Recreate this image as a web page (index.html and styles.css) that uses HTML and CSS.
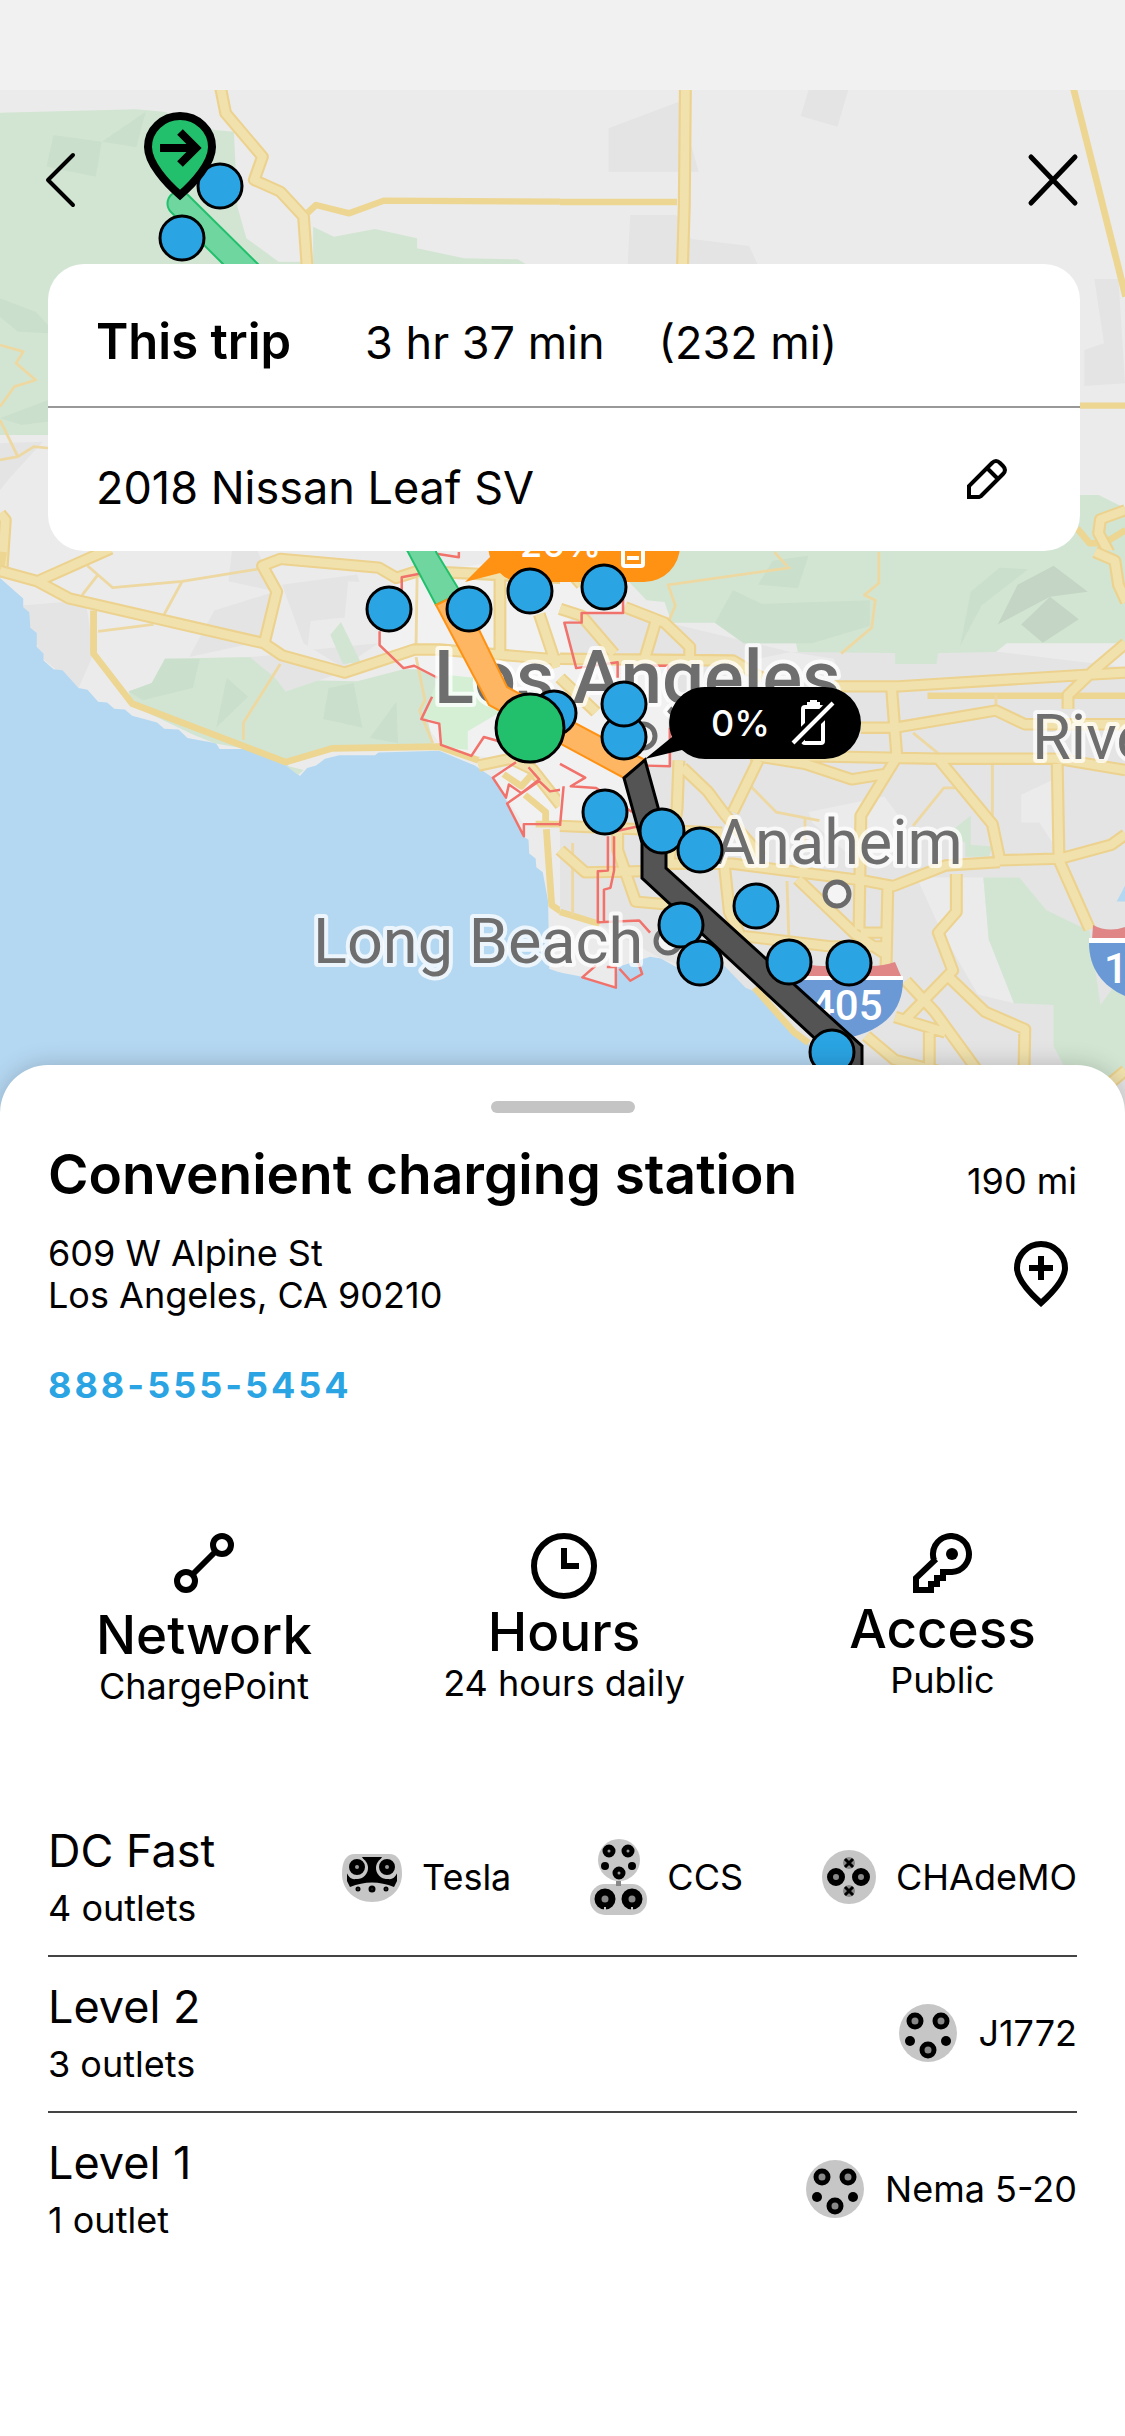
FILE: index.html
```html
<!DOCTYPE html>
<html lang="en">
<head>
<meta charset="utf-8">
<meta name="viewport" content="width=device-width, initial-scale=1">
<title>Convenient charging station</title>
<link rel="stylesheet" href="styles.css">
</head>
<body>
<div class="status-bar"></div>
<main>
<section class="hero" aria-label="Trip map">
  <svg class="map" viewBox="0 90 1125 1025" role="img" aria-label="Map of Los Angeles with charging stations">
    <rect class="land" y="90" width="1125" height="1025"/>

    <!-- north west -->
    <g transform="translate(0 80) scale(.3571 .3333)">
      <path class="park" d="M0 98 380 88 460 95 600 150 655 155 665 380 690 475 780 545 860 545 860 700 200 700 200 1065 0 1065Z"/>
      <path class="park" d="M877 440 935 470 1050 447 1168 475V505L1300 535 1450 538 1500 570H877Z"/>
      <path class="park-dark" d="M285 185 408 95 382 202ZM150 165 285 185 268 290 130 260ZM0 655 100 695 134 735V760L50 755 0 710ZM134 960 0 1015 60 1035 134 1025Z"/>
      <path class="pale" d="M860 170 1005 75 890 210ZM590 40V140L550 130Z"/>
      <path class="urban" d="M0 1090 120 1085 30 1190 0 1230Z"/>
      <g id="nw"><path class="rm" d="M618 25 632 100 735 230 712 300 785 335 850 410 860 560M0 1300 15 1320 5 1480"/></g>
      <use href="#nw" class="top"/>
      <path class="rs" d="M860 400 885 375 978 400 1075 362 1568 365"/>
      <path class="rt" d="M0 795 65 815 45 850 100 900 40 920 0 980M0 1020 50 1130 95 1100 140 1105M50 1130 0 1140"/>
    </g>

    <!-- north east -->
    <g transform="translate(560 80) scale(.3603 .3333)">
      <path class="urban" d="M135 145 330 65 385 275H135ZM690 30H800L770 140 668 108ZM188 552 195 405H322L365 477 525 498 548 552ZM1483 597H1550L1568 910 1455 918V810L1510 790Z"/>
      <path class="park" d="M1440 1245H1495L1570 1285V1480H1200Z"/>
      <path class="rs" d="M0 366H325M1425 25 1570 650M1440 977H1570"/>
      <path class="rs" d="M1435 1345 1470 1390 1510 1390 1570 1350"/>
      <g id="ne"><path class="rm" d="M348 25 345 375 340 560M1570 1290 1500 1318 1495 1360 1520 1410 1545 1480"/></g>
      <use href="#ne" class="top"/>
    </g>

    <!-- south west -->
    <g transform="translate(0 540) scale(.3571 .3444)">
      <path class="urban" d="M60 190 240 175 262 330 220 430 120 345ZM600 205 770 150 750 290 530 340ZM650 30H720L775 150 640 120ZM790 130 1000 100 1060 300 960 370 850 300ZM700 340 800 330 960 385 800 440Z"/>
      <path class="pale" d="M975 120 1125 130 1065 210 1060 300 860 320 870 235 965 225Z"/>
      <path class="city" d="M1125 105 1570 35V830H1470L1380 690 1440 640 1320 625 1235 595 1180 520 1225 400 1130 370 1065 305V200Z"/>
      <path class="sea" d="M0 110 65 170V195L82 210 85 255 103 270V310L122 330V350L150 375 175 378 220 430 245 435 275 470 300 472 320 490 350 492 370 510 440 530 460 548 500 550 525 575 605 590 615 607H690L740 625 800 650 840 685 860 662 885 655 910 635 950 625H1050L1060 617 1230 612 1330 655 1380 690 1420 760 1465 860 1480 870 1482 910 1500 925 1502 950 1520 965 1535 1050 1538 1245 1572 1257V1690H0Z"/>
      <path class="park" d="M360 440 425 415 462 345 700 340 770 400 800 440 890 408 1000 410 1130 375H1180L1230 400 1195 510 1215 600 930 610 800 655 850 668 835 682 800 655 680 605 600 590 540 565 370 480ZM955 238 1010 355 960 360 925 275Z"/>
      <path class="park-dark" d="M360 440 425 415 462 345 560 345 540 430 400 465ZM635 400 695 455 605 545ZM920 430 990 415 1015 545 905 520ZM1110 470 1115 590 1035 575Z"/>
      <path class="city-park" d="M1230 390 1330 400 1400 500 1310 555V610L1240 600 1230 530 1185 515Z"/>
      <path class="rs" d="M10 35 0 95M262 205V330L370 475 800 645 930 605 1230 600 1340 640M1530 840 1545 1060 1570 1078"/>
      <path class="rt" d="M245 75 315 138 510 120 720 85M510 120 460 215M275 100 230 160M275 265 430 245M785 360 682 530V580M1168 110 1165 310M1165 340 1190 465 1175 495 1212 590"/>
      <g id="sw"><path class="rm" d="M0 90 105 120 195 170 740 300 790 335 965 385 1160 318 1230 318 1570 348M105 120 310 25M740 300 775 150 735 75 785 55 1060 80 1110 110 1170 90 1570 110M1400 110V330M1510 215 1560 370M1340 655 1430 635 1490 665 1570 770"/></g>
      <use href="#sw" class="top"/>
      <path class="rs" d="M1410 680 1460 715 1490 680M1470 740 1528 790V830M1500 825H1570"/>
      <path class="border" d="M1222 40 1285 50V35M1175 98 1125 108V150M1063 265V305L1130 372 1160 365 1225 400M1210 455 1180 520 1230 533 1235 595 1320 627 1355 572 1400 585M1445 645 1380 690 1417 748 1425 710 1460 735 1510 695 1480 660M1510 700 1540 730 1570 725M1570 825H1467V860L1420 765 1510 700"/>
    </g>

    <!-- south east -->
    <g transform="translate(560 540) scale(.3603 .3444)">
      <path class="urban" d="M0 120 300 240 640 325H1220L1570 370V1690H720L690 1460 515 1300 280 1215 100 1110 0 1090Z"/>
      <path class="pale" d="M690 790 900 745 960 830 960 930 830 940 700 820ZM1280 740 1380 690V900L1330 820H1280ZM990 980H1175L1190 1160 1260 1345 1160 1320 1060 1140ZM480 360 640 325 760 345 780 400 560 395Z"/>
      <path class="city" d="M0 35 190 120 175 215H60L12 240 45 370 160 350 300 365V655H240L180 700 200 790 130 850 0 830Z"/>
      <path class="park" d="M200 30H1570V300H1240L1210 325 1050 328 1045 360H930V328L660 325 655 300H510L430 240H310L290 180 240 175 190 120ZM1175 980H1275L1350 1075 1470 1135 1500 1350 1570 1250V1540L1480 1690 1370 1470V1350L1260 1345 1190 1160ZM1140 800V885L1200 890 1190 920H1125V880L1080 850Z"/>
      <path class="park-dark" d="M480 145 560 185 860 175 860 250 700 300H510L430 240ZM590 60 690 45 660 140 550 130ZM1220 80 1300 85 1170 190 1110 310 1140 150Z"/>
      <path class="rock" d="M1370 75 1465 150 1360 165 1215 245 1270 130ZM1360 165 1440 230 1340 298 1280 245Z"/>
      <path class="sea" d="M-3 1255 62 1268 155 1300 160 1240 250 1210 280 1215 340 1250 450 1230 515 1300 560 1320 640 1430 690 1460 720 1690H-3ZM1570 1000V1050L1545 1050Z"/>
      <path class="rs" d="M1020 452H1570M540 1300 650 1430 690 1460M0 1080 110 1115"/>
      <path class="rt" d="M595 35 630 75M640 80 300 130 320 190 300 240M885 35V125L845 160 875 175 865 255 780 330M1210 450V500M1200 645V800M520 705 600 790 720 815M980 830 1065 720H1100M630 990 635 1150M35 880V1090M680 810V900M980 560 1050 620"/>
      <g id="se"><path class="rm" d="M0 60 60 130M0 200 60 220 150 330M180 195 290 240 360 310V370M265 240 235 345M0 345 480 350 560 400M760 425 940 425 1480 390 1570 385M835 545H930L1210 495 1290 535H1570M920 425 935 630M560 625 1050 635H1380L1570 668M935 630 835 800 830 1130M1050 635 1200 825 1220 925M1570 300 1480 380 1410 450V490M1380 650 1385 930M1220 930 1390 925 1530 885 1570 855M1220 935 1070 945 925 1005 850 990 480 940H280M1385 930 1470 1130M550 640 480 790M455 930 470 1080 510 1170M530 625 680 650 810 695 900 680M330 640 325 780 300 950M340 660 410 730 460 800 560 920M0 830 450 850M0 900 70 965 300 960M160 780V900L180 960 210 1050 320 1060M660 985 820 1145 900 1200M910 1000 905 1240M835 1140H900M510 1150 750 1180 900 1180M1100 970V1080L1050 1140 1090 1250 960 1390M960 1280 1040 1370 1200 1600M1080 1270 1180 1370 1290 1420 1285 1690M930 1385 1070 1430M850 1440 930 1510 1080 1550M1025 1430V1530M1485 35 1540 60 1550 130 1572 180M1500 1600 1570 1540M0 400 100 500M150 480 160 620"/></g>
      <use href="#se" class="top"/>
      <path class="border" d="M175 120V212H60V240H12L45 372 160 355V400M250 365H300V400M305 545V657L240 655M0 650 70 690 30 715 100 720 200 790M10 715 0 830M135 850 215 832M133 860V960L105 962V1110L220 1105 250 1140M150 860V960L140 1010 122 1015V1110M130 1240H155V1300L62 1270 100 1235M165 1245 195 1280 228 1260 215 1220"/>
    </g>

    <!-- highway shields -->
    <path fill="#e08686" d="M795 967 799 962Q823 970 847 962 871 970 895 962L901 976H792Z"/>
    <path fill="#fff" d="M792 976H903V981H792Z"/>
    <path fill="#6a99d6" d="M790 980H903C903 1012 882 1031 847 1038 812 1031 790 1012 790 980Z"/>
    <path fill="#e08686" d="M1092 940 1093 925Q1110 934 1130 925V940Z"/>
    <path fill="#fff" d="M1089 938H1130V943H1089Z"/>
    <path fill="#6a99d6" d="M1089 943H1202C1202 975 1181 996 1146 1002 1111 996 1089 975 1089 943Z"/>
    <text class="shield" x="811" y="1020">405</text>
    <text class="shield" x="1104" y="983">110</text>

    <circle class="town" cx="643" cy="736" r="12"/>
    <circle class="town" cx="668" cy="941" r="12"/>
    <circle class="town" cx="837" cy="894" r="12"/>
    <text class="place city-name" x="434" y="703">Los Angeles</text>
    <text class="place" x="313" y="963">Long Beach</text>
    <text class="place" x="714" y="864">Anaheim</text>
    <text class="place" x="1032" y="759">Riverside</text>

    <!-- route, coloured by remaining charge -->
    <path class="leg-full" d="M188 195 436 440V552L461 593 436 605 408 552 223 264 171 212A12 12 0 0 1 188 195Z"/>
    <path class="leg-low" d="M436 605 461 593 507 687 645 760 624 778 489 705Z"/>
    <path class="leg-empty" d="M624 778 645 760 658 807 666 845V868L862 1046V1120H838V1060L642 878V843Z"/>

    <!-- charge callouts -->
    <path fill="#ff9213" d="M524 510H644A36 36 0 0 1 644 582H524Q508 582 500 573L465 582 490 557A36 36 0 0 1 524 510Z"/>
    <text class="callout" x="520" y="557">20%</text>
    <g fill="none" stroke="#fff" stroke-width="4"><rect x="623" y="530" width="20" height="36" rx="2"/><path d="M627 558H639"/></g>
    <path d="M705 687H825A36 36 0 0 1 825 759H705Q692 759 682 750L645 759 672 737A36 36 0 0 1 705 687Z"/>
    <text class="callout" x="711" y="736">0%</text>
    <g fill="none" stroke="#fff" stroke-width="4"><rect x="803" y="707" width="20" height="36" rx="2"/><path d="M807 704H820M810 702H817"/><path stroke="#000" stroke-width="12" d="M794 742 833 704"/><path stroke-width="4" d="M793 743 833 703"/></g>

    <g class="station">
      <circle cx="220" cy="186" r="22"/><circle cx="182" cy="238" r="22"/>
      <circle cx="389" cy="609" r="22"/><circle cx="469" cy="609" r="22"/><circle cx="530" cy="591" r="22"/><circle cx="604" cy="587" r="22"/>
      <circle cx="554" cy="713" r="22"/><circle cx="624" cy="737" r="22"/><circle cx="624" cy="704" r="22"/><circle cx="605" cy="812" r="22"/>
      <circle cx="662" cy="831" r="22"/><circle cx="700" cy="850" r="22"/><circle cx="756" cy="906" r="22"/><circle cx="681" cy="925" r="22"/>
      <circle cx="700" cy="963" r="22"/><circle cx="789" cy="962" r="22"/><circle cx="849" cy="963" r="22"/><circle cx="832" cy="1052" r="22"/>
    </g>
    <circle cx="530" cy="728" r="34" fill="#22c06c" stroke="#000" stroke-width="3"/>
    <g stroke="#000" stroke-width="8">
      <path fill="#22c06c" d="M180 195C166 183 148 163 148 147A32 31 0 0 1 212 147C212 163 194 183 180 195Z"/>
      <path fill="none" d="M160 148H197M180 132 196 148 180 164"/>
    </g>
  </svg>

  <div class="overlay">
    <nav class="nav">
      <button class="icon-button" aria-label="Back"><svg width="54" height="60" viewBox="0 0 54 60"><path d="M41 5 16 30 41 55" fill="none" stroke="#000" stroke-width="4" stroke-linecap="round" stroke-linejoin="round"/></svg></button>
      <button class="icon-button" aria-label="Close"><svg width="54" height="60" viewBox="0 0 54 60"><path d="M5 7 49 53M49 7 5 53" fill="none" stroke="#000" stroke-width="5" stroke-linecap="round"/></svg></button>
    </nav>
    <div class="trip-card">
      <div class="trip-row">
        <h2>This trip</h2>
        <span class="duration">3 hr 37 min</span>
        <span class="distance">(232 mi)</span>
      </div>
      <div class="trip-row vehicle">
        <span>2018 Nissan Leaf SV</span>
        <button class="icon-button edit" aria-label="Edit vehicle"><svg width="40" height="40" viewBox="0 0 40 40" fill="none" stroke="#000" stroke-width="4"><path d="M2 38V27L25 4Q29 0 33 4L36 7Q40 11 36 15L14 37 12 38ZM20 9 31 20"/></svg></button>
      </div>
    </div>
  </div>
</section>

<section class="sheet">
  <div class="handle"></div>
  <header class="title-row">
    <h1>Convenient charging station</h1>
    <span>190 mi</span>
  </header>
  <div class="address-row">
    <address>609 W Alpine St<br>Los Angeles, CA 90210</address>
    <button class="icon-button add-stop" aria-label="Add stop"><svg width="54" height="66" viewBox="0 0 54 66" fill="none" stroke="#000" stroke-width="6"><path d="M27 62C17 53 3 38 3 27A24 24 0 0 1 51 27C51 38 37 53 27 62ZM27 15V39M15 27H39"/></svg></button>
  </div>
  <a class="phone" href="tel:888-555-5454">888-555-5454</a>

  <div class="facts">
    <div class="fact">
      <svg width="60" height="75" viewBox="0 0 60 75" fill="none" stroke="#000" stroke-width="6"><circle cx="12" cy="48" r="9"/><circle cx="48" cy="12" r="9"/><path d="M18 42 42 18"/></svg>
      <h3>Network</h3><p>ChargePoint</p>
    </div>
    <div class="fact">
      <svg width="66" height="72" viewBox="0 0 66 72" fill="none" stroke="#000" stroke-width="6"><circle cx="33" cy="33" r="30"/><path d="M33 15V33H48"/></svg>
      <h3>Hours</h3><p>24 hours daily</p>
    </div>
    <div class="fact">
      <svg width="60" height="69" viewBox="0 0 60 69" fill="none" stroke="#000" stroke-width="6"><path d="M21 27A18 18 0 1 1 39 39H30V45H24V51H18V57H3V45L23 26"/><circle cx="39" cy="21" r="6" fill="#000" stroke="none"/></svg>
      <h3>Access</h3><p>Public</p>
    </div>
  </div>

  <ul class="levels">
    <li class="level">
      <div><h3>DC Fast</h3><p>4 outlets</p></div>
      <ul class="plugs">
        <li><svg width="60" height="50" viewBox="0 0 60 50"><path fill="#c6c6c6" d="M13 2H47C56 2 60 9 60 22 60 38 47 50 30 50 13 50 0 38 0 22 0 9 4 2 13 2Z"/><path fill="#000" d="M20 5H40C34 14 38 26 46 27 51 28 54 24 55 21V29L52 35Q30 26 8 35L5 29V21C6 24 9 28 14 27 22 26 26 14 20 5Z"/><g fill="#c6c6c6"><circle cx="15" cy="16" r="11"/><circle cx="45" cy="16" r="11"/></g><g fill="#999" stroke="#000" stroke-width="6"><circle cx="15" cy="15" r="5"/><circle cx="45" cy="15" r="5"/></g><g fill="#888" stroke="#000" stroke-width="3"><circle cx="30" cy="37" r="2"/><circle cx="16" cy="37" r="1"/><circle cx="44" cy="37" r="1"/></g></svg>Tesla</li>
        <li><svg width="57" height="78" viewBox="0 0 57 78"><g fill="#c6c6c6"><circle cx="29" cy="22" r="21"/><rect y="46" width="57" height="31" rx="15"/></g><path fill="#888" d="M26 43H31V48H26Z"/><g fill="#999" stroke="#000" stroke-width="5"><circle cx="19" cy="13" r="4"/><circle cx="38" cy="13" r="4"/><circle cx="29" cy="35" r="4"/></g><circle cx="15" cy="28" r="4"/><circle cx="42" cy="28" r="4"/><g fill="#888" stroke="#000" stroke-width="7"><circle cx="15" cy="61" r="7"/><circle cx="42" cy="61" r="7"/></g><path stroke="#c6c6c6" stroke-width="2" d="M15 69V73M42 69V73"/></svg>CCS</li>
        <li><svg width="54" height="54" viewBox="0 0 54 54"><circle cx="27" cy="27" r="27" fill="#c6c6c6"/><g fill="#888" stroke="#000" stroke-width="6"><circle cx="14" cy="27" r="6"/><circle cx="39" cy="27" r="6"/></g><g fill="#888"><circle cx="27" cy="13" r="6"/><circle cx="27" cy="41" r="6"/></g><path stroke="#000" stroke-width="3" d="M23 9 31 17M31 9 23 17M23 37 31 45M31 37 23 45"/></svg>CHAdeMO</li>
      </ul>
    </li>
    <li class="level">
      <div><h3>Level 2</h3><p>3 outlets</p></div>
      <ul class="plugs">
        <li><svg width="59" height="60" viewBox="0 0 59 60"><g id="j-plug"><circle cx="29" cy="30" r="29" fill="#c6c6c6"/><g fill="#888" stroke="#000" stroke-width="5"><circle cx="16" cy="18" r="6"/><circle cx="42" cy="18" r="6"/><circle cx="29" cy="47" r="6"/></g><circle cx="11" cy="38" r="5"/><circle cx="47" cy="38" r="5"/></g></svg>J1772</li>
      </ul>
    </li>
    <li class="level">
      <div><h3>Level 1</h3><p>1 outlet</p></div>
      <ul class="plugs">
        <li><svg width="59" height="60" viewBox="0 0 59 60"><use href="#j-plug"/></svg>Nema 5-20</li>
      </ul>
    </li>
  </ul>
</section>
</main>
</body>
</html>
```
FILE: styles.css
```css
* { box-sizing: border-box; }
body, h1, h2, h3, p, ul { margin: 0; padding: 0; }
ul { list-style: none; }
body {
  background: #fff;
  color: #000;
  font-family: Inter, "Liberation Sans", sans-serif;
  font-size: 36px;
  line-height: 42px;
}
svg { display: block; flex: none; }

.status-bar { height: 90px; background: #f1f1f1; }

/* The map and its controls share one grid cell. */
.hero { display: grid; }
.map, .overlay { grid-area: 1 / 1; }
.map { width: 100%; height: auto; }
.overlay { z-index: 1; padding: 60px 45px 0 48px; }

.icon-button {
  display: grid;
  place-items: center;
  padding: 0;
  border: 0;
  background: none;
  cursor: pointer;
}

.nav { display: flex; justify-content: space-between; margin: 0 0 54px -16px; }

.trip-card { background: #fff; border-radius: 36px; }
.trip-row {
  display: flex;
  align-items: baseline;
  padding: 44px 48px 29px;
  font-size: 45px;
  line-height: 68px;
}
.trip-row h2 { font-size: 49px; font-weight: 600; line-height: 68px; }
.duration { margin-left: 74px; }
.distance { margin-left: 54px; }
.vehicle {
  justify-content: space-between;
  align-items: flex-start;
  border-top: 2px solid #999;
  padding: 46px 48px 29px;
}
.edit { width: 90px; height: 50px; }

.sheet {
  position: relative;
  z-index: 2;
  margin-top: -50px;
  padding: 36px 48px 162px;
  border-radius: 48px 48px 0 0;
  background: #fff;
  box-shadow: 0 0 24px rgba(0, 0, 0, .2);
}
.handle { width: 144px; height: 12px; margin: 0 auto; border-radius: 6px; background: #c4c4c4; }
.title-row { display: flex; align-items: baseline; justify-content: space-between; margin-top: 28px; }
h1 { font-size: 55px; font-weight: 600; line-height: 66px; }

.address-row { display: flex; align-items: center; justify-content: space-between; margin-top: 25px; }
address { font-style: normal; }
.add-stop { width: 72px; height: 72px; }
.phone {
  display: inline-block;
  margin-top: 48px;
  color: #2aa4e3;
  font-weight: 700;
  letter-spacing: 3px;
  text-decoration: none;
}

.facts {
  display: grid;
  grid-template-columns: 288fr 432fr 325fr;
  margin: 127px -28px 0 12px;
}
.fact { display: flex; flex-direction: column; align-items: center; }
.fact h3 { font-size: 53px; font-weight: 500; line-height: 54px; }
.fact p { margin-top: 3px; }

.levels { margin-top: 94px; }
.level {
  display: flex;
  align-items: center;
  justify-content: space-between;
  padding: 23px 0 26px;
  border-bottom: 2px solid #444;
}
.level:last-child { border-bottom: 0; }
.level h3 { font-size: 45px; font-weight: 400; line-height: 54px; }
.level p { margin-top: 9px; }
.plugs { display: flex; gap: 79px; }
.plugs li { display: flex; align-items: center; gap: 20px; }

.land, .pale { fill: #ebebeb; }
.urban { fill: #e4e4e4; }
.city { fill: #f1f1f1; }
.park { fill: #d2e5d2; }
.park-dark { fill: #cbe0cc; }
.rock { fill: #c4d5c5; }
.city-park { fill: #d5efd5; }
.sea { fill: #b5d8f2; }
.rm, .rs, .rt, .border { fill: none; stroke-linejoin: round; }
.rm { stroke: var(--road, #ecd28e); stroke-width: var(--road-width, 36); }
.top { --road: #f1e2ad; --road-width: 24; }
.rs { stroke: #edd592; stroke-width: 19; }
.rt { stroke: #eed8a2; stroke-width: 8; }
.border { stroke: #f1716b; stroke-width: 7; }
.town { fill: #f4f4f4; stroke: #6b6b6b; stroke-width: 5; }
.place {
  fill: #6e6e6e;
  stroke: rgba(255, 255, 255, .75);
  stroke-width: 8px;
  stroke-linejoin: round;
  paint-order: stroke;
  font: 400 63px/1 Roboto, sans-serif;
}
.city-name { font-size: 74px; font-weight: 500; }
.shield { fill: #fff; font: 500 42px/1 Roboto, sans-serif; }
.callout { fill: #fff; font: 500 36px/1 Inter, sans-serif; }
.leg-full { fill: #6fd6a0; stroke: #22c06c; stroke-width: 2; }
.leg-low { fill: #ffb662; stroke: #ff9213; stroke-width: 2; }
.leg-empty { fill: #545454; stroke: #000; stroke-width: 3; }
.station { fill: #2aa4e3; stroke: #000; stroke-width: 3; }
```
